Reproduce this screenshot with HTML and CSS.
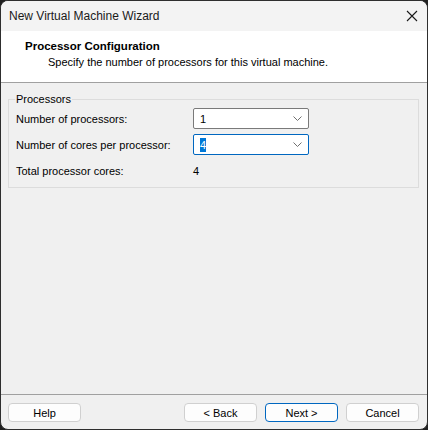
FILE: index.html
```html
<!DOCTYPE html>
<html>
<head>
<meta charset="utf-8">
<link rel="stylesheet" href="styles.css">
</head>
<body>
<div class="window">
  <div class="titlebar">
    <span class="title">New Virtual Machine Wizard</span>
    <svg class="close" width="12" height="12" viewBox="0 0 12 12"><path d="M1 1 L11 11 M11 1 L1 11" stroke="#1a1a1a" stroke-width="1.1" fill="none"/></svg>
  </div>
  <div class="header">
    <div class="h-title">Processor Configuration</div>
    <div class="h-sub">Specify the number of processors for this virtual machine.</div>
  </div>
  <div class="content">
    <fieldset class="group">
      <legend>Processors</legend>
      <div class="row first">
        <span class="label">Number of processors:</span>
        <div class="combo"><span class="val">1</span><svg class="chev" width="9" height="5" viewBox="0 0 9 5"><path d="M0.5 0.5 L4.5 4.5 L8.5 0.5" stroke="#707070" stroke-width="1" fill="none"/></svg></div>
      </div>
      <div class="row">
        <span class="label">Number of cores per processor:</span>
        <div class="combo focus"><span class="val"><span class="sel">4</span></span><svg class="chev" width="9" height="5" viewBox="0 0 9 5"><path d="M0.5 0.5 L4.5 4.5 L8.5 0.5" stroke="#707070" stroke-width="1" fill="none"/></svg></div>
      </div>
      <div class="row">
        <span class="label">Total processor cores:</span>
        <span class="tval">4</span>
      </div>
    </fieldset>
  </div>
  <div class="footer">
    <button class="btn">Help</button>
    <div class="spacer"></div>
    <button class="btn">&lt; Back</button>
    <button class="btn default">Next &gt;</button>
    <button class="btn">Cancel</button>
  </div>
</div>
</body>
</html>
```
FILE: styles.css
```css
html, body {
  margin: 0;
  padding: 0;
  background: #202020;
}
body {
  font-family: "Liberation Sans", Arial, sans-serif;
  font-size: 11px;
  color: #000;
}
.window {
  width: 428px;
  height: 430px;
  box-sizing: border-box;
  border: 1px solid #2e2e2e;
  border-radius: 8px;
  background: #f0f0f0;
  overflow: hidden;
  display: flex;
  flex-direction: column;
}
.titlebar {
  height: 30px;
  background: #f3f3f3;
  display: flex;
  align-items: center;
  padding-left: 8px;
  padding-right: 9px;
  flex: none;
}
.title {
  font-size: 12px;
  flex: 1;
  color: #1a1a1a;
}
.close {
  display: block;
}
.header {
  height: 51px;
  background: #fff;
  border-bottom: 1px solid #a0a0a0;
  box-sizing: content-box;
  flex: none;
  padding-left: 24px;
}
.h-title {
  font-weight: bold;
  font-size: 11.5px;
  margin-top: 8px;
  line-height: 14px;
}
.h-sub {
  margin-top: 2px;
  padding-left: 23px;
  line-height: 14px;
}
.content {
  flex: 1;
  padding: 9px 8px 0 7px;
}
.group {
  margin: 0;
  border: 1px solid #dcdcdc;
  padding: 0 0 6px 7px;
  min-width: 0;
}
.group legend {
  padding: 0 1px;
  margin-left: -1px;
  line-height: 14px;
}
.row {
  display: flex;
  align-items: center;
  height: 21px;
  margin-top: 5px;
}
.row.first {
  margin-top: 2px;
}
.label {
  width: 177px;
  flex: none;
}
.combo {
  width: 116px;
  height: 21px;
  box-sizing: border-box;
  border: 1px solid #7a7a7a;
  border-radius: 2px;
  background: #fff;
  display: flex;
  align-items: center;
  padding-left: 6px;
  padding-right: 6px;
}
.combo.focus {
  border-color: #0067c0;
}
.val {
  flex: 1;
  line-height: 14px;
}
.sel {
  background: #0078d7;
  color: #fff;
  padding: 1px 0;
}
.chev {
  display: block;
}
.footer {
  height: 35px;
  box-sizing: border-box;
  flex: none;
  border-top: 1px solid #a0a0a0;
  display: flex;
  align-items: flex-start;
  padding: 8px 8px 0 7px;
  gap: 8px;
}
.spacer {
  flex: 1;
}
.btn {
  width: 73px;
  height: 19px;
  box-sizing: border-box;
  border: 1px solid #d0d0d0;
  border-radius: 4px;
  background: #fdfdfd;
  font-family: "Liberation Sans", Arial, sans-serif;
  font-size: 11px;
  color: #000;
  padding: 0;
  margin: 0;
}
.btn.default {
  border-color: #0067c0;
}
```
